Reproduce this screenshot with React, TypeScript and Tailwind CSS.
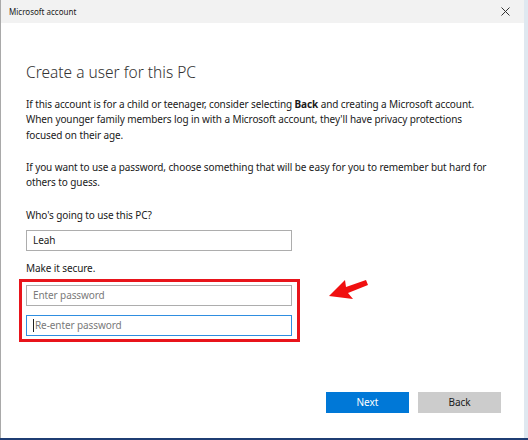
import React from "react";

const font = { fontFamily: '"Noto Sans", "Open Sans", sans-serif' };

function Field({ value, placeholder }: { value?: string; placeholder?: string }) {
  return (
    <div className="flex h-[21px] w-[266px] items-center border border-[#adadad] bg-white px-[6px] text-[10px]">
      {value ? (
        <span className="text-[#222]">{value}</span>
      ) : (
        <span className="text-[#7a7a7a]">{placeholder}</span>
      )}
    </div>
  );
}

function FocusedField({ placeholder }: { placeholder: string }) {
  return (
    <div className="flex h-[21px] w-[266px] items-center border border-solid border-[#2f8ee0] bg-white px-[6px] text-[10px]">
      <span className="mr-px h-[13px] w-px bg-[#222]" />
      <span className="text-[#7a7a7a]">{placeholder}</span>
    </div>
  );
}

export default function App() {
  return (
    <div className="h-[440px] w-[528px] bg-[#dfe8f0]" style={font}>
      <div className="relative flex h-[438px] w-[524px] flex-col border-l border-[#a9a9a9] bg-white">
        {/* title bar */}
        <div className="flex h-[23px] items-center justify-between bg-[#f2f2f2] pl-[8px] pr-[14px] text-[8px] text-[#1a1a1a]">
          <span>Microsoft account</span>
          <svg width="9" height="9" viewBox="0 0 9 9">
            <path d="M0.5 0.5L8.5 8.5M8.5 0.5L0.5 8.5" stroke="#333" strokeWidth="1" />
          </svg>
        </div>

        <div className="flex flex-1 flex-col px-[25px] pt-[38px] text-[10px] leading-[15.5px] tracking-[-0.1px] text-[#1a1a1a]">
          <h1 className="text-[15.5px] font-light leading-[22px] tracking-normal text-[#333]">Create a user for this PC</h1>

          <div className="mt-[13.5px] whitespace-nowrap">
            <p>
              If this account is for a child or teenager, consider selecting <b className="font-bold">Back</b> and
              creating a Microsoft account.
            </p>
            <p>When younger family members log in with a Microsoft account, they'll have privacy protections</p>
            <p>focused on their age.</p>
          </div>

          <div className="mt-[16.5px] whitespace-nowrap">
            <p>If you want to use a password, choose something that will be easy for you to remember but hard for</p>
            <p>others to guess.</p>
          </div>

          <p className="mt-[17px]">Who's going to use this PC?</p>
          <div className="mt-[7px]">
            <Field value="Leah" />
          </div>

          <p className="mt-[10.25px]">Make it secure.</p>
          <div className="-ml-[7px] mt-[2px] flex w-[281px] flex-col gap-[9px] border-[3px] border-[#e8141b] py-[3px] pl-[4px]">
            <Field placeholder="Enter password" />
            <FocusedField placeholder="Re-enter password" />
          </div>

          <div className="-mr-[2px] mt-[50px] flex justify-end gap-[9px] tracking-normal">
            <button className="h-[21px] w-[83px] bg-[#0078d7] text-white">Next</button>
            <button className="h-[21px] w-[83px] bg-[#cccccc] text-[#1a1a1a]">Back</button>
          </div>
        </div>

        {/* annotation arrow */}
        <svg className="absolute left-[325px] top-[276px]" width="46" height="28" viewBox="0 0 46 28">
          <path d="M3 20 L19 4 L20 11 L40 4 L42 9 L22 17 L27 23 Z" fill="#f01010" />
        </svg>
      </div>
      <div className="h-[2px] w-[528px] bg-[#1f3d73]" />
    </div>
  );
}
